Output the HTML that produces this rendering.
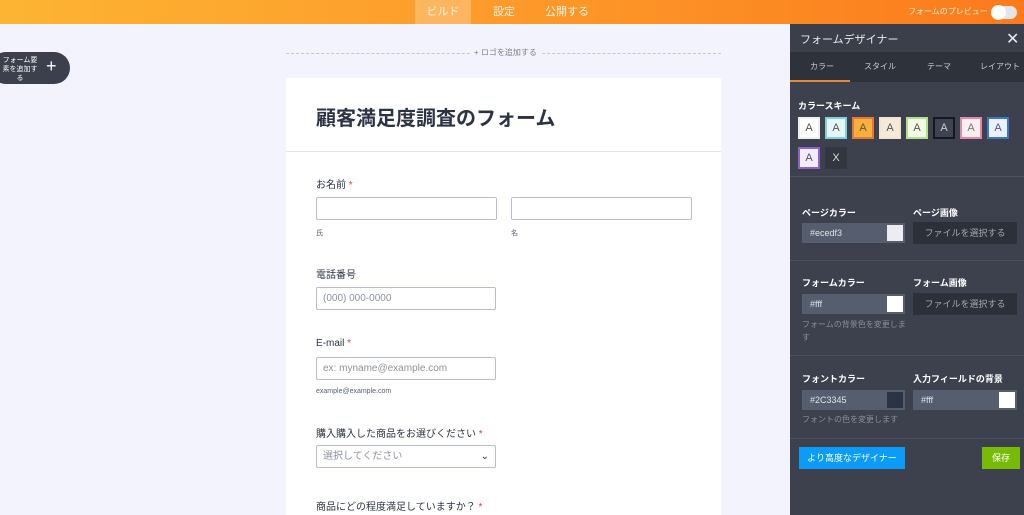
<!DOCTYPE html>
<html><head><meta charset="utf-8"><style>
*{box-sizing:border-box;margin:0;padding:0}
body{width:1024px;height:515px;overflow:hidden;background:#f3f3fd;font-family:"Liberation Sans","Noto Sans CJK JP",sans-serif;position:relative;color:#2c3345}
.top{position:absolute;left:0;top:0;width:1024px;height:24px;background:linear-gradient(90deg,#fdb433,#fd9a2a 50%,#fc7a1c)}
.top span{position:absolute;top:0;height:24px;line-height:24px;font-size:11px;color:#fff3e0}
.ab{position:absolute}
.panel{position:absolute;left:790px;top:24px;width:234px;height:491px;background:#3c414d}
.in{position:absolute;background:#555d6e;color:#dfe3ea;font-size:9px;line-height:20px;padding-left:8px;height:20px}
.sw{position:absolute;right:2px;top:2px;width:16px;height:16px}
.fb{position:absolute;background:#2c3039;color:#a3a8b2;font-size:9px;line-height:22px;height:22px;text-align:center;width:104px}
.lbl{position:absolute;color:#fff;font-size:9px;font-weight:bold}
.hint{position:absolute;color:#8a909b;font-size:8px;line-height:13px}
.sep{position:absolute;left:0;width:234px;height:1px;background:#4b515d}
.ch{position:absolute;width:22px;height:22px;font-size:11px;text-align:center;line-height:18px;border:2px solid}
.card{position:absolute;left:286px;top:78px;width:435px;height:437px;background:#fff}
.f{position:absolute;border:1px solid #b8bdc9;border-radius:2px;height:23px;font-size:10px;color:#8c92a0;line-height:21px;padding-left:6px}
.l{position:absolute;font-size:10px;color:#2c3345}
.l b{color:#e53935;font-weight:normal}
.s{position:absolute;font-size:7px;color:#57606f}
</style></head><body>
<div class="top">
<span style="left:415px;width:56px;background:rgba(255,255,255,.25);text-align:center">ビルド</span>
<span style="left:493px">設定</span>
<span style="left:545px">公開する</span>
<span style="left:908px;font-size:8px">フォームのプレビュー</span>
<div class="ab" style="left:991px;top:6px;width:26px;height:13px;border-radius:7px;background:#e5e5e5"></div>
<div class="ab" style="left:991px;top:5px;width:15px;height:15px;border-radius:8px;background:#fff"></div>
</div>
<div class="ab" style="left:-10px;top:52px;width:80px;height:32px;border-radius:16px;background:#3b404c"></div>
<div class="ab" style="left:0;top:56px;width:40px;font-size:7px;color:#fff;line-height:9px;text-align:center">フォーム要素を追加する</div>
<div class="ab" style="left:46px;top:56px;font-size:18px;color:#fff">+</div>
<div class="ab" style="left:286px;top:53px;width:435px;border-top:1px dashed #c5c7d4"></div>
<div class="ab" style="left:470px;top:47px;padding:0 4px;background:#f3f3fd;font-size:8px;color:#7b8190">+ ロゴを追加する</div>
<div class="card">
<div class="ab" style="left:30px;top:24px;font-size:20px;font-weight:bold">顧客満足度調査のフォーム</div>
<div class="ab" style="left:0;top:73px;width:435px;height:1px;background:#e3e5ec"></div>
<div class="l" style="left:30px;top:98px">お名前 <b>*</b></div>
<div class="f" style="left:30px;top:119px;width:181px"></div>
<div class="f" style="left:225px;top:119px;width:181px"></div>
<div class="s" style="left:30px;top:150px">氏</div><div class="s" style="left:225px;top:150px">名</div>
<div class="l" style="left:30px;top:188px">電話番号</div>
<div class="f" style="left:30px;top:209px;width:180px">(000) 000-0000</div>
<div class="l" style="left:30px;top:260px">E-mail <b>*</b></div>
<div class="f" style="left:30px;top:279px;width:180px">ex: myname@example.com</div>
<div class="s" style="left:30px;top:310px">example@example.com</div>
<div class="l" style="left:30px;top:347px">購入購入した商品をお選びください <b>*</b></div>
<div class="f" style="left:30px;top:367px;width:180px">選択してください<span style="position:absolute;right:6px;color:#2c3345">⌄</span></div>
<div class="l" style="left:30px;top:420px">商品にどの程度満足していますか？ <b>*</b></div>
</div>
<div class="panel">
<div class="ab" style="left:0;top:0;width:234px;height:28px;background:#3a3f4a"></div>
<div class="ab" style="left:10px;top:7px;color:#e8eaee;font-size:11px">フォームデザイナー</div>
<div class="ab" style="left:216px;top:5px;color:#e8eaee;font-size:16px">✕</div>
<div class="ab" style="left:0;top:28px;width:234px;height:30px;background:#2e323b"></div>
<div class="ab" style="left:0;top:56px;width:60px;height:2px;background:#e8883a"></div>
<div class="ab" style="left:20px;top:37px;color:#c9ccd2;font-size:8px">カラー</div>
<div class="ab" style="left:74px;top:37px;color:#c9ccd2;font-size:8px">スタイル</div>
<div class="ab" style="left:137px;top:37px;color:#c9ccd2;font-size:8px">テーマ</div>
<div class="ab" style="left:190px;top:37px;color:#c9ccd2;font-size:8px">レイアウト</div>
<div class="lbl" style="left:8px;top:75px">カラースキーム</div>
<div class="ch" style="left:8px;top:93px;background:#fff;border-color:#eee;color:#555">A</div>
<div class="ch" style="left:35px;top:93px;background:#e6f6f6;border-color:#7fd0d8;color:#555">A</div>
<div class="ch" style="left:62px;top:93px;background:#fbb03b;border-color:#e4783a;color:#555">A</div>
<div class="ch" style="left:89px;top:93px;background:#f4ead9;border-color:#efe4d1;color:#555">A</div>
<div class="ch" style="left:116px;top:93px;background:#f0fae5;border-color:#b3de8a;color:#555">A</div>
<div class="ch" style="left:143px;top:93px;background:#3e4352;border-color:#151820;color:#ccc">A</div>
<div class="ch" style="left:170px;top:93px;background:#fdeef3;border-color:#e08aa8;color:#777">A</div>
<div class="ch" style="left:197px;top:93px;background:#e9f2fd;border-color:#3a77c4;color:#557">A</div>
<div class="ch" style="left:8px;top:123px;background:#f2ecfc;border-color:#8f62c9;color:#555">A</div>
<div class="ch" style="left:35px;top:123px;background:#32363f;border-color:#32363f;color:#ddd">X</div>
<div class="sep" style="top:152px"></div>
<div class="lbl" style="left:12px;top:182px">ページカラー</div>
<div class="lbl" style="left:123px;top:182px">ページ画像</div>
<div class="in" style="left:12px;top:199px;width:103px">#ecedf3<div class="sw" style="background:#ecedf3"></div></div>
<div class="fb" style="left:123px;top:198px">ファイルを選択する</div>
<div class="sep" style="top:236px"></div>
<div class="lbl" style="left:12px;top:252px">フォームカラー</div>
<div class="lbl" style="left:123px;top:252px">フォーム画像</div>
<div class="in" style="left:12px;top:270px;width:103px">#fff<div class="sw" style="background:#fff"></div></div>
<div class="fb" style="left:123px;top:269px">ファイルを選択する</div>
<div class="hint" style="left:12px;top:294px;width:104px">フォームの背景色を変更します</div>
<div class="sep" style="top:331px"></div>
<div class="lbl" style="left:12px;top:348px">フォントカラー</div>
<div class="lbl" style="left:123px;top:348px">入力フィールドの背景</div>
<div class="in" style="left:12px;top:366px;width:103px">#2C3345<div class="sw" style="background:#2c3345"></div></div>
<div class="in" style="left:123px;top:366px;width:104px">#fff<div class="sw" style="background:#fff"></div></div>
<div class="hint" style="left:12px;top:389px">フォントの色を変更します</div>
<div class="sep" style="top:414px"></div>
<div class="ab" style="left:9px;top:423px;width:106px;height:22px;background:#0a9cf8;color:#fff;font-size:9px;line-height:22px;text-align:center">より高度なデザイナー</div>
<div class="ab" style="left:192px;top:423px;width:38px;height:22px;background:#78bb07;color:#fff;font-size:9px;line-height:22px;text-align:center">保存</div>
</div>
</body></html>
